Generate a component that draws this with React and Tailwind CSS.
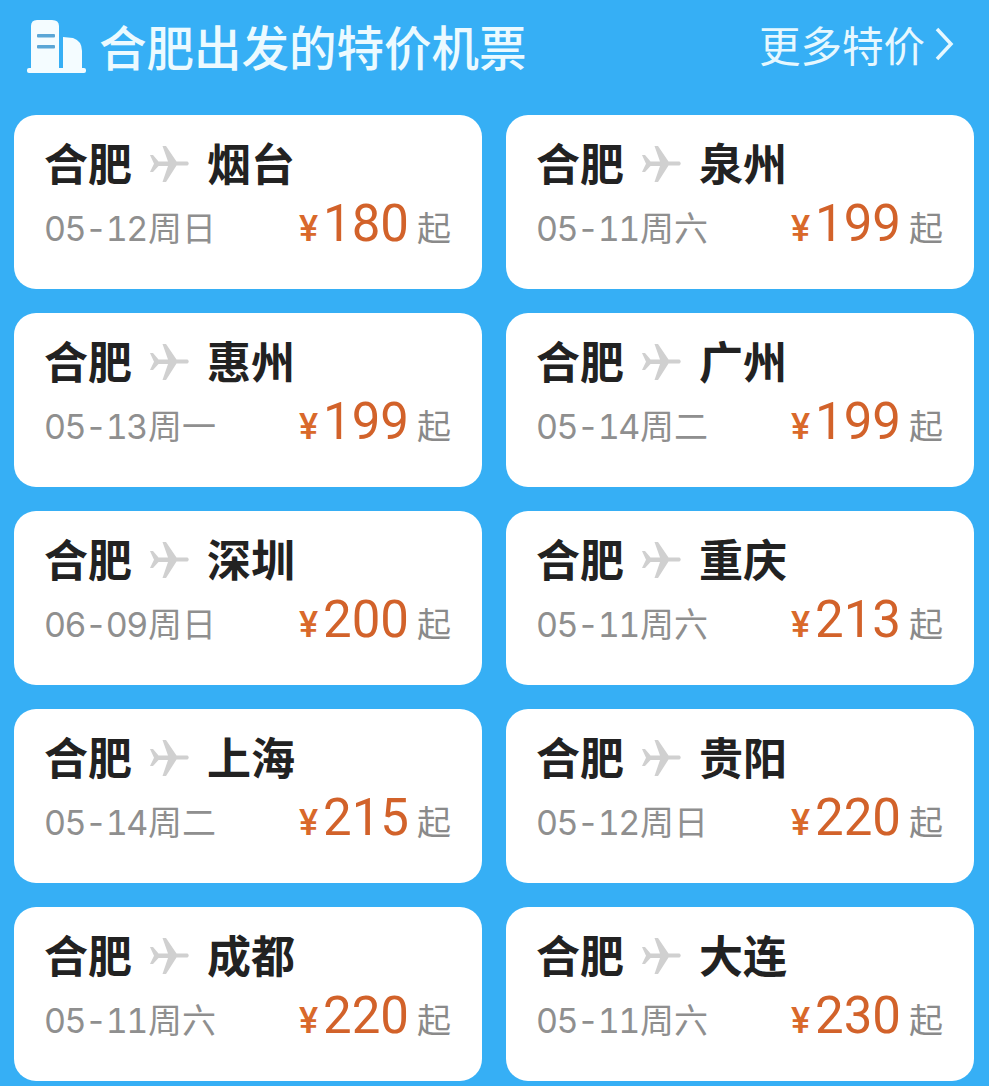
const CJK = '"Noto Sans CJK SC", sans-serif';
const DIGIT = 'Roboto, "Noto Sans CJK SC", sans-serif';

const flights = [
  ["烟台", "05-12", "周日", "180"],
  ["泉州", "05-11", "周六", "199"],
  ["惠州", "05-13", "周一", "199"],
  ["广州", "05-14", "周二", "199"],
  ["深圳", "06-09", "周日", "200"],
  ["重庆", "05-11", "周六", "213"],
  ["上海", "05-14", "周二", "215"],
  ["贵阳", "05-12", "周日", "220"],
  ["成都", "05-11", "周六", "220"],
  ["大连", "05-11", "周六", "230"],
];

function Plane() {
  return (
    <svg width="40" height="36" viewBox="0 0 40 36" className="block shrink-0" fill="#d0d0d0">
      <path d="M0 9 L3 9 L8.5 15.5 L18 15.5 L12.5 0 L16 0 L26.5 15.5 L37.5 15.5 Q40 17.5 37.5 19.5 L26.5 19.5 L16 36 L12.5 36 L18 20 L8.5 20 L3 26 L0 26 L4 17.8 Z" />
    </svg>
  );
}

function Building() {
  return (
    <svg width="60" height="54" viewBox="0 0 60 54" className="block">
      <path d="M4 48 L4 6 Q4 0 10 0 L25 0 Q32 0 32 6 L32 48 Z" fill="#f4fcff" />
      <path d="M36 17 L46 18 Q55 21 55 31 L55 48 L36 48 Z" fill="#f4fcff" />
      <rect x="0" y="48" width="59" height="5" rx="2" fill="#f4fcff" />
      <rect x="10" y="14" width="18" height="3.5" rx="1" fill="#5aa6d6" />
      <rect x="10" y="25" width="18" height="3.5" rx="1" fill="#5aa6d6" />
    </svg>
  );
}

function Card({ city, date, day, price }) {
  return (
    <div className="h-[174px] rounded-[22px] bg-white pl-[30px] pr-[31px] pt-[21px] flex flex-col">
      <div className="flex items-center h-[52px]">
        <span className="text-[44px] leading-[52px] font-bold text-[#222222] w-[88px] whitespace-nowrap" style={{ fontFamily: CJK }}>合肥</span>
        <span className="ml-[18px] mr-[17px] mt-[3px]"><Plane /></span>
        <span className="text-[44px] leading-[52px] font-bold text-[#222222] whitespace-nowrap" style={{ fontFamily: CJK }}>{city}</span>
      </div>
      <div className="flex items-end justify-between mt-[8px]">
        <span className="flex items-baseline mb-[6px] text-[#8f8f8f] whitespace-nowrap leading-[44px]">
          <span className="text-[34px] w-[104px] tabular-nums tracking-[-1.5px]" style={{ fontFamily: "Inter, sans-serif" }}>{date}</span>
          <span className="text-[34px]" style={{ fontFamily: CJK }}>{day}</span>
        </span>
        <span className="flex items-baseline whitespace-nowrap leading-[56px]" style={{ fontFamily: DIGIT }}>
          <span className="text-[36px] font-medium text-[#d9692a] mr-[5px]">¥</span>
          <span className="text-[51px] text-[#d2622a]">{price}</span>
          <span className="text-[34px] text-[#8a8a8a] ml-[8px]" style={{ fontFamily: CJK }}>起</span>
        </span>
      </div>
    </div>
  );
}

export default function App() {
  return (
    <div className="w-[989px] h-[1086px] overflow-hidden bg-[#36aff5]">
      <div className="h-[115px] flex items-start justify-between pl-[27px] pr-[35px] pt-[20px]">
        <div className="flex items-start gap-[12px]">
          <Building />
          <span className="text-[47.5px] leading-[52px] font-medium text-[#ecfaff] whitespace-nowrap" style={{ fontFamily: CJK }}>合肥出发的特价机票</span>
        </div>
        <div className="flex items-center h-[48px]">
          <span className="text-[41.5px] leading-[48px] text-[#e6f8ff] whitespace-nowrap" style={{ fontFamily: CJK }}>更多特价</span>
          <svg width="20" height="36" viewBox="0 0 20 36" className="ml-[9px]" fill="none" stroke="#e6f8ff" strokeWidth="3.5">
            <path d="M3 3 L17 18 L3 33" />
          </svg>
        </div>
      </div>
      <div className="grid grid-cols-[468px_468px] gap-x-[24px] gap-y-[24px] pl-[14px]">
        {flights.map(([city, date, day, price]) => (
          <Card key={city} city={city} date={date} day={day} price={price} />
        ))}
      </div>
    </div>
  );
}
